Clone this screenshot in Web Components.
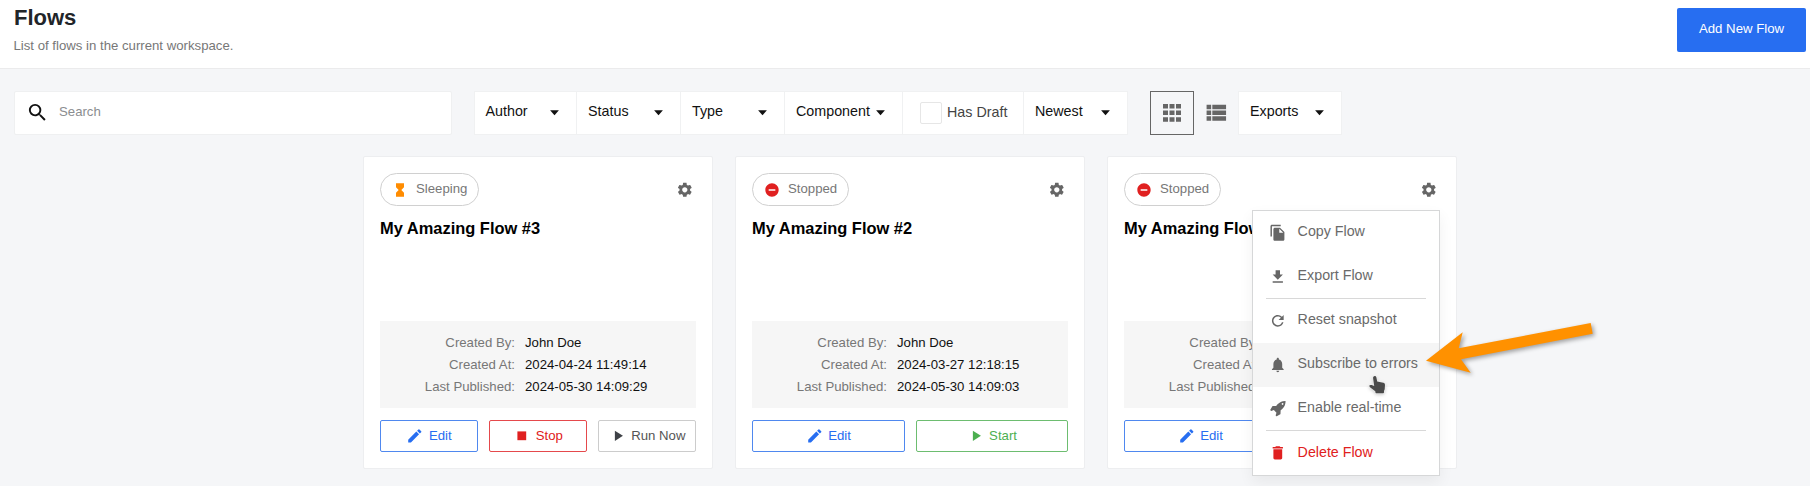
<!DOCTYPE html>
<html lang="en">
<head>
<meta charset="utf-8">
<title>Flows</title>
<style>
html{background:#fff}
body{margin:0;font:13.2px/22px "Liberation Sans",Arial,sans-serif;color:#111;overflow:hidden}
</style>
</head>
<body>
<flows-page></flows-page>
<script>
const define = (name, render, setup) => customElements.define(name, class extends HTMLElement {
  connectedCallback() {
    if (this.shadowRoot) return;
    this.attachShadow({ mode: 'open' }).innerHTML = render(this);
    if (setup) setup(this);
  }
});
const attr = (el, name, fallback = '') => el.getAttribute(name) || fallback;

const ICONS = {
  search: '<path d="M15.5 14h-.79l-.28-.27A6.47 6.47 0 0 0 16 9.5 6.5 6.5 0 1 0 9.5 16c1.61 0 3.09-.59 4.23-1.57l.27.28v.79l5 4.99L20.49 19l-4.99-5zm-6 0C7.01 14 5 11.99 5 9.5S7.01 5 9.5 5 14 7.01 14 9.5 11.99 14 9.5 14z"/>',
  caret: '<path d="M7 9.500l5 5.500 5-5.500z"/>',
  grid: '<path d="M3 3h5v4.500H3zM9.500 3h5v4.500h-5zM16 3h5v4.500h-5zM3 9.600h5v4.500H3zM9.500 9.600h5v4.500h-5zM16 9.600h5v4.500h-5zM3 16.200h5v4.500H3zM9.500 16.200h5v4.500h-5zM16 16.200h5v4.500h-5z"/>',
  list: '<path d="M4 14h4v-4H4v4zm0 5h4v-4H4v4zM4 9h4V5H4v4zm5 5h12v-4H9v4zm0 5h12v-4H9v4zM9 5v4h12V5H9z"/>',
  hourglass: '<path d="M6 2v6h.01L6 8.01 10 12l-4 4 .01.01H6V22h12v-5.99h-.01L18 16l-4-4 4-3.99-.01-.01H18V2H6z"/>',
  minus: '<path d="M12 2C6.48 2 2 6.48 2 12s4.48 10 10 10 10-4.48 10-10S17.52 2 12 2zm5 11H7v-2h10v2z"/>',
  gear: '<path d="M19.14 12.94c.04-.3.06-.61.06-.94 0-.32-.02-.64-.07-.94l2.03-1.58c.18-.14.23-.41.12-.61l-1.92-3.32c-.12-.22-.37-.29-.59-.22l-2.39.96c-.5-.38-1.03-.7-1.62-.94l-.36-2.54c-.04-.24-.24-.41-.48-.41h-3.84c-.24 0-.43.17-.47.41l-.36 2.54c-.59.24-1.13.57-1.62.94l-2.39-.96c-.22-.08-.47 0-.59.22L2.74 8.87c-.12.21-.08.47.12.61l2.03 1.58c-.05.3-.09.63-.09.94s.02.64.07.94l-2.03 1.58c-.18.14-.23.41-.12.61l1.92 3.32c.12.22.37.29.59.22l2.39-.96c.5.38 1.03.7 1.62.94l.36 2.54c.05.24.24.41.48.41h3.84c.24 0 .44-.17.47-.41l.36-2.54c.59-.24 1.13-.56 1.62-.94l2.39.96c.22.08.47 0 .59-.22l1.92-3.32c.12-.22.07-.47-.12-.61l-2.01-1.58zM12 15.6c-1.98 0-3.6-1.62-3.6-3.6s1.62-3.6 3.6-3.6 3.6 1.62 3.6 3.6-1.62 3.6-3.6 3.6z"/>',
  edit: '<path d="M3 17.25V21h3.75L17.81 9.94l-3.75-3.75L3 17.25zM20.71 7.04a.996.996 0 0 0 0-1.41l-2.34-2.34a.996.996 0 0 0-1.41 0l-1.83 1.83 3.75 3.75 1.83-1.83z"/>',
  stop: '<path d="M6 6h12v12H6z"/>',
  play: '<path d="M8 5v14l11-7z"/>',
  copy: '<path d="M16 1H4c-1.1 0-2 .9-2 2v14h2V3h12V1zm-1 4l6 6v10c0 1.100-.9 2-2 2H7.990C6.890 23 6 22.100 6 21l.01-14c0-1.100.89-2 1.990-2h7zm-1 7h5.500L14 6.500V12z"/>',
  download: '<path d="M19 9h-4V3H9v6H5l7 7 7-7zM5 18v2h14v-2H5z"/>',
  refresh: '<path d="M17.65 6.35A7.958 7.958 0 0 0 12 4c-4.42 0-7.99 3.58-7.99 8s3.57 8 7.99 8c3.730 0 6.840-2.550 7.730-6h-2.080A5.990 5.990 0 0 1 12 18c-3.310 0-6-2.690-6-6s2.690-6 6-6c1.660 0 3.140.69 4.220 1.780L13 11h7V4l-2.350 2.350z"/>',
  bell: '<path d="M12 22c1.100 0 2-.9 2-2h-4c0 1.100.89 2 2 2zm6-6v-5c0-3.070-1.640-5.640-4.500-6.320V4c0-.83-.67-1.500-1.500-1.500s-1.500.67-1.500 1.500v.68C7.630 5.360 6 7.920 6 11v5l-2 2v1h16v-1l-2-2z"/>',
  rocket: '<path transform="translate(1.300 -.3) scale(.0128)" d="M1440 448q0-40-28-68t-68-28-68 28-28 68 28 68 68 28 68-28 28-68zm224-288q0 249-75.500 430.500t-253.500 360.500q-81 80-195 176l-20 379q-2 16-16 26l-384 224q-7 4-16 4-12 0-23-9l-64-64q-13-14-8-32l85-276-281-281-276 85q-3 1-9 1-14 0-23-9l-64-64q-17-19-5-39l224-384q10-14 26-16l379-20q96-114 176-195 188-187 358-258t431-71q14 0 24 9.500t10 22.500z"/>',
  trash: '<path d="M6 19c0 1.100.9 2 2 2h8c1.100 0 2-.9 2-2V7H6v12zM19 4h-3.500l-1-1h-5l-1 1H5v2h14V4z"/>'
};
define('flow-icon', el => `<style>:host{display:block;flex:none;width:${attr(el,'size','17.6')}px;height:${attr(el,'size','17.6')}px}svg{display:block;overflow:visible;width:100%;height:100%;fill:currentColor}</style><svg viewBox="0 0 24 24">${ICONS[attr(el,'name')]}</svg>`);

define('page-header', () => `<style>
:host{display:flex;justify-content:space-between;align-items:flex-start;box-sizing:border-box;height:69px;padding:5px 4px 0 14px;background:#fff;border-bottom:1px solid #ebebec}
h1{margin:0;font-size:22px;line-height:25px;color:#212529}
p{margin:5px 0 0 -.5px;color:#777}
button{margin-top:2.500px;width:129px;height:44px;padding:0 0 2px;border:0;border-radius:2px;background:#276ef1;color:#fff;font:inherit}
</style><div><h1>Flows</h1><p>List of flows in the current workspace.</p></div><button>Add New Flow</button>`);

define('search-box', () => `<style>
:host{display:flex;align-items:center;box-sizing:border-box;width:438px;height:44px;padding-left:10.500px;background:#fff;border:1px solid #eff0f1;border-radius:2px;color:#111}
flow-icon{margin-bottom:1px}
span{color:#8b8d90;padding:0 0 3px 10.500px}
</style><flow-icon name="search" size="23"></flow-icon><span>Search</span>`);

define('filter-select', el => `<style>
:host{display:flex;align-items:center;justify-content:space-between;box-sizing:border-box;height:44px;width:${attr(el,'width')}px;padding:0 11px 0 11px;background:#fff;border:1px solid #f0f1f2;font-size:14.300px;color:#111}
span{padding-bottom:4px}
flow-icon{margin-bottom:1px}
</style><span><slot></slot></span><flow-icon name="caret" size="21"></flow-icon>`);

define('check-filter', () => `<style>
:host{display:flex;align-items:center;gap:5.500px;box-sizing:border-box;width:122px;height:44px;padding-left:16.500px;background:#fff;border:1px solid #f0f1f2;font-size:14.300px;color:#444}
i{box-sizing:border-box;width:22px;height:22px;border:1px solid #e6e6e6;border-radius:2px;margin-bottom:1px}
span{padding-bottom:2px}
</style><i></i><span><slot></slot></span>`);

define('view-toggle', () => `<style>
:host{display:flex;align-items:center;color:#666;margin-left:22px}
div{display:flex;align-items:center;justify-content:center;box-sizing:border-box;width:44px;height:44px}
.on{border:1px solid #666}
</style><div class="on"><flow-icon name="grid" size="24"></flow-icon></div><div><flow-icon name="list" size="27.5"></flow-icon></div>`);

define('filter-bar', () => `<style>
:host{display:flex;padding:22px 0 0 14px}
.group{display:flex;margin-left:22px}
.group>*+*{margin-left:-1px}
</style><search-box></search-box>
<div class="group">
<filter-select width="103" style="padding-left:10.500px">Author</filter-select><filter-select width="105">Status</filter-select><filter-select width="105">Type</filter-select><filter-select width="119">Component</filter-select><check-filter>Has Draft</check-filter><filter-select width="105">Newest</filter-select>
</div><view-toggle></view-toggle><filter-select width="104">Exports</filter-select>`);

define('status-badge', el => `<style>
:host{display:flex;align-items:center;box-sizing:border-box;height:33px;padding:0 11px 0 10.500px;border:1px solid #d0d0d0;border-radius:17px;color:#777}
flow-icon{color:${attr(el,'color')};margin-right:8.500px}
span{padding-bottom:1px}
</style><flow-icon name="${attr(el,'icon')}" size="16"></flow-icon><span><slot></slot></span>`);

define('action-button', el => `<style>
:host{display:flex;flex:1 1 0;min-width:0;align-items:center;justify-content:center;gap:5px;box-sizing:border-box;height:32px;border:1px solid ${attr(el,'line')};border-radius:2px;color:${attr(el,'ink')};white-space:nowrap}
flow-icon{color:${attr(el,'fill',attr(el,'ink'))}}
span{padding-bottom:1px}
</style><flow-icon name="${attr(el,'icon')}"></flow-icon><span><slot></slot></span>`);

define('flow-card', el => `<style>
:host{display:flex;flex-direction:column;box-sizing:border-box;width:350px;height:313px;padding:16px;background:#fff;border:1px solid #edeef0;border-radius:2px;position:relative}
header{display:flex;justify-content:space-between;align-items:center;padding-right:2.500px}
header flow-icon{color:#666;margin-top:.5px}
h2{margin:10px 0 0;font-size:16.450px;line-height:24px;color:#000}
dl{box-sizing:border-box;display:grid;grid-template-columns:135px 1fr;column-gap:10px;grid-auto-rows:22px;height:87px;margin:auto 0 12px;padding:11px 0 0;background:#f6f6f6}
dt{text-align:right;color:#777}dd{margin:0;color:#111}
footer{display:flex;gap:11px}
</style>
<header><slot name="status"></slot><flow-icon name="gear"></flow-icon></header>
<h2>${attr(el,'name')}</h2>
<dl><dt>Created By:</dt><dd>John Doe</dd><dt>Created At:</dt><dd>${attr(el,'created')}</dd><dt>Last Published:</dt><dd>${attr(el,'published')}</dd></dl>
<footer><slot></slot></footer><slot name="overlay"></slot>`);

define('menu-item', el => `<style>
:host{display:flex;align-items:center;height:43.700px;padding-left:16px;color:#6a6a6a;font-size:14.250px}
:host([active]){background:#f5f5f5}
:host([danger]){color:#e02020}
flow-icon{color:${el.hasAttribute('danger')?'#e02020':'#666'}}
span{padding:0 0 3px 11px}
:host([icon=refresh]) span{padding-bottom:4px}
</style><flow-icon name="${attr(el,'icon')}" size="17.6"></flow-icon><span><slot></slot></span>`);

define('flow-menu', () => `<style>
:host{display:block;position:absolute;z-index:1;left:144px;top:53px;box-sizing:border-box;width:188px;height:266px;background:#fff;border:1px solid #d6d7d8;box-shadow:0 6px 14px rgba(0,0,0,.06)}
hr{margin:0 13px;border:0;height:1px;background:#d8d8d8}
</style>
<menu-item icon="copy">Copy Flow</menu-item><menu-item icon="download">Export Flow</menu-item><hr>
<menu-item icon="refresh">Reset snapshot</menu-item><menu-item icon="bell" active>Subscribe to errors</menu-item><menu-item icon="rocket">Enable real-time</menu-item><hr>
<menu-item icon="trash" danger>Delete Flow</menu-item>`);

define('hand-pointer', () => `<style>
:host{display:block;position:absolute;z-index:2;left:1367px;top:374px;width:20px;height:22px}
svg{display:block;overflow:visible;filter:drop-shadow(0 0 1px #fff) drop-shadow(0 1px 1.500px rgba(0,0,0,.25))}
</style><svg width="20" height="22" viewBox="0 0 20 22"><path fill="#4a4a4a" d="M7.200 2.200C8.300 1.800 9.200 2.500 9.400 3.600L10.200 7.600 16.300 8.800C17.500 9.100 18 9.800 18 11L17.700 15.300 17 17V18.300Q17 19.200 16.100 19.200H9.300Q8.500 19.200 8.400 18.300L8.300 17.300 3 13.200Q1.900 12.100 2.700 11.300 3.400 10.700 4.700 11.100L7.200 12 6.100 4.200C5.900 3.200 6.300 2.500 7.200 2.200Z"/></svg>`);

define('callout-arrow', () => `<style>
:host{display:block;position:absolute;z-index:3;left:1420px;top:318px;width:180px;height:62px}
svg{display:block;overflow:visible;filter:drop-shadow(2px 2px 2px rgba(0,0,0,.35))}
</style><svg width="180" height="62"><path fill="#ff9100" d="M6 42.700 42.700 14.300 38.700 30.300 170.700 5 172.700 15.700 41 41.300 50.700 54.700Z"/></svg>`);

define('flows-page', () => `<style>
:host{display:block;position:relative;width:1810px;height:486px;background:#f5f6f8}
main{display:flex;gap:22px;padding:21px 0 0 363px}
</style>
<page-header></page-header><filter-bar></filter-bar>
<main>
<flow-card name="My Amazing Flow #3" created="2024-04-24 11:49:14" published="2024-05-30 14:09:29">
<status-badge slot="status" icon="hourglass" color="#ff8c00">Sleeping</status-badge>
<action-button icon="edit" ink="#276ef1" line="#4f88ef">Edit</action-button><action-button icon="stop" ink="#e02020" line="#e5494c">Stop</action-button><action-button icon="play" ink="#555" fill="#3f4247" line="#ccc">Run Now</action-button>
</flow-card>
<flow-card name="My Amazing Flow #2" created="2024-03-27 12:18:15" published="2024-05-30 14:09:03">
<status-badge slot="status" icon="minus" color="#e02020">Stopped</status-badge>
<action-button icon="edit" ink="#276ef1" line="#4f88ef">Edit</action-button><action-button icon="play" ink="#4caf50" line="#6dbd70">Start</action-button>
</flow-card>
<flow-card name="My Amazing Flow #1" created="2024-03-27 12:18:15" published="2024-05-30 14:09:03">
<status-badge slot="status" icon="minus" color="#e02020">Stopped</status-badge>
<action-button icon="edit" ink="#276ef1" line="#4f88ef">Edit</action-button><action-button icon="play" ink="#4caf50" line="#6dbd70">Start</action-button>
<flow-menu slot="overlay"></flow-menu>
</flow-card>
</main>
<hand-pointer></hand-pointer><callout-arrow></callout-arrow>`);
</script>
</body>
</html>
